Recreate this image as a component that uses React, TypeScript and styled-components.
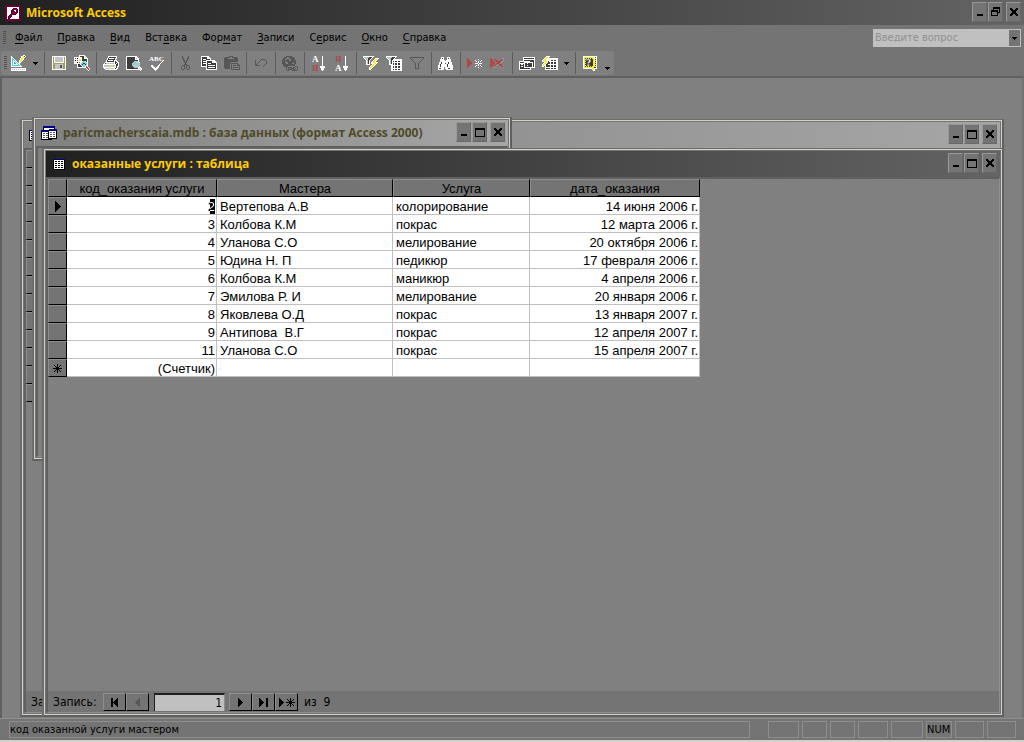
import React from "react";
import styled, { createGlobalStyle, css } from "styled-components";

const c = {
  chrome: "#747474",
  face: "#808080",
  light: "#8e8e8e",
  edge: "#d4d0c8",
  dark: "#606060",
  accent: "#ffcc00",
};

const uiFont = `"DejaVu Sans Condensed", "DejaVu Sans", sans-serif`;
const titleFont = `"Open Sans", "Noto Sans", sans-serif`;
const gridFont = `"Liberation Sans", Arial, sans-serif`;

const GlobalStyle = createGlobalStyle`
  * { box-sizing: border-box; }
  body { margin: 0; background: ${c.face}; }
  button, input { font: inherit; color: inherit; border-radius: 0; margin: 0; }
`;

/* ---------- pixel icons ---------- */

const palette: Record<string, string> = {
  W: "#ffffff",
  L: "#c4c4c4",
  D: "#3c3c3c",
  G: "#565656",
  M: "#a0a0a0",
  K: "#000000",
  Y: "#f4ec28",
  O: "#a0a058",
  C: "#38d8e8",
  T: "#a8d0d4",
  R: "#b04848",
  E: "#e03030",
  N: "#000080",
  P: "#800040",
  Q: "#500028",
};

const Svg = styled.svg`
  display: block;
  flex: none;
  overflow: visible;
`;

function Pixels({ rows, children }: { rows: string[]; children?: React.ReactNode }) {
  const width = Math.max(...rows.map((r) => r.length));
  const runs: React.ReactNode[] = [];
  rows.forEach((row, y) => {
    let x = 0;
    while (x < row.length) {
      let end = x + 1;
      while (end < row.length && row[end] === row[x]) end++;
      if (palette[row[x]]) {
        runs.push(<rect key={`${x}-${y}`} x={x} y={y} width={end - x} height={1} fill={palette[row[x]]} />);
      }
      x = end;
    }
  });
  return (
    <Svg width={width} height={rows.length} viewBox={`0 0 ${width} ${rows.length}`} shapeRendering="crispEdges" aria-hidden>
      {runs}
      {children}
    </Svg>
  );
}

const icons: Record<string, string[]> = {
  key: [
    "PQPQPQPQPQPQPQPQ",
    "QPQPQPQPQPQPQPQP",
    "PQWWWWWWWWWWWWPQ",
    "QPWWWWWWQQQQWWQP",
    "PQWWWWWQPPPPQWPQ",
    "QPWWWWQPPWWPQWQP",
    "PQWWWWQPPPWPQWPQ",
    "QPWWWWQPPPPPQWQP",
    "PQWWWWQPPPPQWWPQ",
    "QPWWWQPPQQQWWWQP",
    "PQWWQPQWWWWWWWPQ",
    "QPWQPPQWWWWWWWQP",
    "PQWQPQWWWWWWWWPQ",
    "QPWQQWWWWWWWWWQP",
    "PQPQPQPQPQPQPQPQ",
    "QPQPQPQPQPQPQPQP",
  ],
  design: [
    "............WW..",
    "W.........WWYRW.",
    "WW........WYYW..",
    "WCW......WYYW...",
    "WCCW.....WYYW...",
    "WCWCW...WYYW....",
    "WCWWCW..WYW.....",
    "WCW.WCW.WW......",
    "WCW..WCWW.......",
    "WCWWWWWCW.......",
    "WCCCCCCCCW......",
    "WWWWWWWWWWW.....",
    "................",
    "WWWWWWWWWWWWWWW.",
    "WLWLWLWLWLWLWLW.",
    "WWWWWWWWWWWWWWW.",
  ],
  save: [
    "WWWWWWWWWWWWWW",
    "WOWLLLLLLLLWOW",
    "WOWLLLLLLLLWOW",
    "WOWLLLLLLLLWOW",
    "WOWLLLLLLLLWOW",
    "WOWLLLLLLLLWOW",
    "WOWWWWWWWWWWOW",
    "WOOOOOOOOOOOOW",
    "WOOLLLLLLLLOOW",
    "WOOLLLLLGGLOOW",
    "WOOLLLLLGGLOOW",
    "WOOLLLLLGGLOOW",
    "WOOLLLLLLLLOOW",
    "WWWWWWWWWWWWWW",
  ],
  search: [
    ".....WWWWWW.....",
    ".....WDDDDWW....",
    "WWWWWWWWDDWLW...",
    "WEWNWWWWDDWWWW..",
    "WWWWWYYWDDDDDW..",
    "WNWEWYYWDDDDDW..",
    "WWWWWWWWWCCWDW..",
    "WYWNWEWWCTTCWW..",
    "WWWWWWWCTDDTCW..",
    "...WDDWCDTTDCW..",
    "...WDDDWCTTCWW..",
    "...WDDDDWCCWEW..",
    "...WWWWWWWWWEEW.",
    "............WEEW",
    ".............WEW",
    "..............W.",
  ],
  print: [
    ".....WWWWWWWWW..",
    ".....WDDDDDDDW..",
    "....WDWWWWWDWW..",
    "....WDDDDDDDW...",
    "...WDWWWWWDWWW..",
    "...WDDDDDDDWDWW.",
    "..WWWWWWWWWWDDWW",
    ".WDLLLLLLLLWDWDW",
    "WWWWWWWWWWWWWDDW",
    "WLLLLLLLLLLLWDDW",
    "WLLLLLLYYYLLWDWW",
    "WWWWWWWWWWWWWDW.",
    ".WLLLLLLLLLWDWW.",
    "..WWWWWWWWWWWW..",
  ],
  preview: [
    "WWWWWWWWWWW.....",
    "WDDDDDDDDWWW....",
    "WDDDDDDDDWLWW...",
    "WDDDDDDDDWWWW...",
    "WDDDDDDDDDDDW...",
    "WDDDDDDDLLLLW...",
    "WDDDDDDLTCTTLW..",
    "WDDDDDLTCTTTTL..",
    "WDDDDDLCTTTTTL..",
    "WDDDDDLTTTTTTL..",
    "WDDDDDDLTTTTLW..",
    "WDDDDDDDLLLLWWW.",
    "WDDDDDDDDDDDWLWW",
    "WWWWWWWWWWWWWWLW",
    "..............W.",
  ],
  spell: [
    "................",
    "................",
    "................",
    "................",
    "..............W.",
    ".............W..",
    "............W...",
    "...........W....",
    "..........W.....",
    "..WW.....WW.....",
    "..WWW...WW......",
    "...WWW.WWW......",
    "....WWWWW.......",
    ".....WWW........",
    "......W.........",
  ],
  cut: [
    "..G.....G..",
    "..G.....G..",
    "..GG...GG..",
    "...G...G...",
    "...GG.GG...",
    "....G.G....",
    "....GGG....",
    ".....G.....",
    "....GGG....",
    "..GGG.GGG..",
    ".G..G.G..G.",
    ".G..G.G..G.",
    ".G..G.G..G.",
    "..GG...GG..",
  ],
  copy: [
    "WWWWWWWW........",
    "WDDDDDWWW.......",
    "WDDDDDWWWW......",
    "WDWWWDDDDW......",
    "WDDDDWWWWWWWWW..",
    "WDWWWWDDDDDWWWW.",
    "WDDDDWDDDDDWWWWW",
    "WDWWWWDWWWDDDDDW",
    "WDDDDWDDDDDDDDDW",
    "WDDDDWDWWWWWWWDW",
    "WWWWWWDDDDDDDDDW",
    ".....WDWWWWWWWDW",
    ".....WDDDDDDDDDW",
    ".....WWWWWWWWWWW",
  ],
  paste: [
    ".....GGGG.......",
    ".GGGGG..GGGGG...",
    "GGGG......GGGG..",
    "GGGGGGGGGGGGGG..",
    "GGGGGGGGGGGGGG..",
    "GGGGGGGGGGGGGG..",
    "GGGGGGG.........",
    "GGGGGG.GGGGGGG..",
    "GGGGGG.G.....GG.",
    "GGGGGG.G.GGG.GGG",
    "GGGGGG.G.......G",
    "GGGGGG.G.GGGGG.G",
    ".GGGGG.G.......G",
    ".......GGGGGGGGG",
  ],
  undo: [
    "......GGGG..",
    "G....G....G.",
    "G...G......G",
    "G..G.......G",
    "G.G........G",
    "GG........G.",
    "GGGGG....G..",
    "........G...",
  ],
  link: [
    "....GGGGGG......",
    "..GGG..GGGGG....",
    ".GGG....GGGGG...",
    ".GG..GG..GGGG...",
    "GGGGGGG..GGGGG..",
    "GGG.GGGGGGGGGG..",
    "GGG...GGGGG.GG..",
    "GGGG..GGGG..GG..",
    ".GGGGGGGGGGGG...",
    ".GGGGGGGGGGGG...",
    "..GGGG.......GG.",
    "....G.GGGG.GG..G",
    "....G.G.GGGG.G.G",
    "....G.GGGG.GG..G",
    ".....GG...GGGGG.",
  ],
  arrow: [
    "................",
    "...........W....",
    "...........W....",
    "...........W....",
    "...........W....",
    "...........W....",
    "...........W....",
    "...........W....",
    "...........W....",
    "...........W....",
    "...........W....",
    ".........WWWWW..",
    ".........WWWWW..",
    "..........WWW...",
    "..........WWW...",
    "...........W....",
  ],
  filterSelection: [
    "WWWWWWWWWWW.....",
    "WTTTLLDDDW......",
    ".WTLLDDDW...WWWW",
    "..WTLDDW...WYYW.",
    "...WLDW...WYYW..",
    "...WLDW..WYYW...",
    "...WLDW.WYYYWWW.",
    "...WLDW.WWWYYW..",
    "...WWWW..WYYW...",
    "........WYYW....",
    ".......WYYW.....",
    "......WYYW......",
    "......WYW.......",
    "......WW........",
  ],
  filterForm: [
    "WWWWWWWWWWW.....",
    "WTTTLLDDDW......",
    ".WTLLDDDW.......",
    "..WTLDDWWWWWWWWW",
    "...WLDWWWWWWWWWW",
    "...WLDWDWDDWDDWW",
    "...WLDWWWWWWWWWW",
    "...WLDWDWDDWDDWW",
    "...WWWWDWDDWDDWW",
    ".....WWWWWWWWWWW",
    ".....WWDWDDWDDWW",
    ".....WWDWDDWDDWW",
    ".....WWWWWWWWWWW",
    ".....WWDWDDWDDWW",
    ".....WWWWWWWWWWW",
  ],
  filter: [
    "GGGGGGGGGGGGGG",
    "G............G",
    ".G..........G.",
    "..G........G..",
    "...G......G...",
    "....G....G....",
    ".....G..G.....",
    ".....G..G.....",
    ".....G..G.....",
    ".....G..G.....",
    ".....G..G.....",
    ".....GGGG.....",
  ],
  find: [
    "...WWW...WWW....",
    "...WDW...WDW....",
    "..WWWW...WWWW...",
    "..WWWWW.WWWWW...",
    "..WWWWWWWWWWW...",
    ".WWDWWWWWWDWWW..",
    ".WWDWWWDWWDWWW..",
    ".WDWWWWWWDWWWW..",
    "WWDWWWWWWDWWWWW.",
    "WWDWWWWWWDWWWWW.",
    "WWWWWW.WWWWWWWW.",
    "WDDWWW.WWWDDWWW.",
    "WWWWWW..WWWWWWW.",
  ],
  newRecord: [
    "R..............",
    "RR.........W...",
    "RRR.....W.....W",
    "RRRR.....W.W.W.",
    "RRRRR......W...",
    "RRRRR...WWW.WWW",
    "RRRR.......W...",
    "RRR......W.W.W.",
    "RR......W.....W",
    "R..........W...",
  ],
  deleteRecord: [
    "R...........MM.",
    "RR..RR.....RR..",
    "RRR..RRR..RR.M.",
    "RRRR..RRRRR.M..",
    "RRRRR..RRR.M...",
    "RRRRR.RRRRM....",
    "RRRR.RRM.RRR...",
    "RRR.RRM...RRRM.",
    "RR.RRM......RR.",
    "R..MM........M.",
  ],
  dbWindow: [
    "....WWWWWWWWWWWW",
    "....WDDDDDDDDDDW",
    "....WWWWWWWWWWWW",
    "....WDDDDDDDDDDW",
    "WWWWWWWWWWWDDDDW",
    "WDDDDWWWWWWWWWDW",
    "WWWWWWDDWDDDDWDW",
    "WDWWDWDDDDDDDWDW",
    "WDDDDWDDWDDDDWDW",
    "WDWWDWDDDDDDDWDW",
    "WDDDDWWWWWWWWWWW",
    "WDDDDDDDDDDW....",
    "WWWWWWWWWWWW....",
  ],
  newObject: [
    "....WWWW........",
    "...WYYW.........",
    "..WYYWWWWWWWWWWW",
    ".WYYWWWWWWWWWWWW",
    "WYYYWWWWWDDWDDWW",
    "WWWYYWDWWWWWWWWW",
    "..WYYWDDWDDWDDWW",
    ".WYYWDDDWDDWDDWW",
    "WYYWDDWWWWWWWWWW",
    "WYWWDDDDWDDWDDWW",
    "WW.WDDDDWDDWDDWW",
    "...WWWWWWWWWWWWW",
    "...WDDDDWDDWDDWW",
    "...WWWWWWWWWWWWW",
  ],
  help: [
    "WWWWWWWWWWWWWW",
    "WYYYYYYYYYYWDW",
    "WYDYDYDYDYYWWW",
    "WYYDDDDDDDYYDW",
    "WYDDDDDDDDYYYW",
    "WYYDDDDDDDYYDW",
    "WYDDDDDDDDYYYW",
    "WYYDDDDDDDYYDW",
    "WYDDDDDDDDYYYW",
    "WYYDDDDDDDYYDW",
    "WYDYDYDYDYYYYW",
    "WYYYYYYYYYYDDW",
    "WWWWWWWWWYYWWW",
    ".........WYW..",
    "..........WW..",
  ],
  database: [
    "..NNNNNNNNNNNN..",
    "..NNNNNNNNNNNN..",
    "..KWWWWWWWWWWK..",
    "..KWWWWWNNNNNNNN",
    "NNNNNNNNNNNNNNNN",
    "NNNNNNNKWWWWWWWK",
    "KWWWWWWKWGGWGGWK",
    "KWGGWGGKWWWWWWWK",
    "KWWWWWWKWGGWGGWK",
    "KWGGWGGKWWWWWWWK",
    "KWWWWWWKWGGWGGWK",
    "KWGGWGGKWWWWWWWK",
    "KWWWWWWKKKKKKKKK",
    "KKKKKKKKKKK.....",
  ],
  table: [
    "NNNNNNNNNNNN",
    "KWWWWWWWWWWK",
    "KWKKWKKWKKWK",
    "KWWWWWWWWWWK",
    "KWKKWKKWKKWK",
    "KWWWWWWWWWWK",
    "KWKKWKKWKKWK",
    "KWWWWWWWWWWK",
    "KWKKWKKWKKWK",
    "KWWWWWWWWWWK",
    "KKKKKKKKKKKK",
  ],
  caret: ["KKKKK", ".KKK.", "..K.."],
  minimize: ["........", "........", "........", "........", "........", "........", ".KKKKKK.", ".KKKKKK."],
  maximize: [
    "KKKKKKKKKK",
    "KKKKKKKKKK",
    "K........K",
    "K........K",
    "K........K",
    "K........K",
    "K........K",
    "K........K",
    "KKKKKKKKKK",
  ],
  restore: [
    "..KKKKKKK",
    "..KKKKKKK",
    "..K.....K",
    "KKKKKKK.K",
    "KKKKKKK.K",
    "K.....KKK",
    "K.....K..",
    "K.....K..",
    "KKKKKKK..",
  ],
  close: ["KK....KK", "KKK..KKK", ".KKKKKK.", "..KKKK..", "..KKKK..", ".KKKKKK.", "KKK..KKK", "KK....KK"],
  first: ["KK....K", "KK...KK", "KK..KKK", "KK.KKKK", "KKKKKKK", "KK.KKKK", "KK..KKK", "KK...KK", "KK....K"],
  previous: ["....G", "...GG", "..GGG", ".GGGG", "GGGGG", ".GGGG", "..GGG", "...GG", "....G"],
  next: ["K....", "KK...", "KKK..", "KKKK.", "KKKKK", "KKKK.", "KKK..", "KK...", "K...."],
  last: ["K......KK", "KK.....KK", "KKK....KK", "KKKK...KK", "KKKKK..KK", "KKKK...KK", "KKK....KK", "KK.....KK", "K......KK"],
  addNew: [
    "K..........K....",
    "KK......K..K..K.",
    "KKK......K.K.K..",
    "KKKK......KKK...",
    "KKKKK..KKKKKKKKK",
    "KKKK......KKK...",
    "KKK......K.K.K..",
    "KK......K..K..K.",
    "K..........K....",
  ],
  current: ["K.....", "KK....", "KKK...", "KKKK..", "KKKKK.", "KKKKKK", "KKKKK.", "KKKK..", "KKK...", "KK....", "K....."],
  star: [
    "....K....",
    ".K..K..K.",
    "..K.K.K..",
    "...KKK...",
    "KKKKKKKKK",
    "...KKK...",
    "..K.K.K..",
    ".K..K..K.",
    "....K....",
  ],
};

const IconText = styled.text<{ $size: number }>`
  font: bold ${(p) => p.$size}px "Liberation Serif", serif;
`;

/* ---------- application frame ---------- */

const Frame = styled.div`
  min-height: 100vh;
  display: flex;
  flex-direction: column;
  background: ${c.chrome};
  color: #000;
  font: 11px/14px ${uiFont};
  cursor: default;
`;

const barTitle = css`
  margin: 0;
  flex: 1;
  white-space: nowrap;
  overflow: hidden;
  font: bold 12px/16px ${titleFont};
`;

const AppTitleBar = styled.header`
  height: 25px;
  display: flex;
  align-items: center;
  gap: 5px;
  padding: 0 3px 0 5px;
  background: linear-gradient(90deg, #202020, #646464);
`;

const AppTitle = styled.h1`
  ${barTitle}
  color: ${c.accent};
`;

const ControlGroup = styled.div`
  display: flex;
  gap: 1px;
  padding-bottom: 2px;

  & > :last-child {
    margin-left: 2px;
  }
`;

const ControlButton = styled.button`
  width: 15px;
  height: 20px;
  display: grid;
  place-items: center;
  padding: 0;
  background: ${c.chrome};
  border: solid;
  border-width: 1px;
  border-color: #989898 #686868 #686868 #989898;
`;

const MenuRow = styled.div`
  height: 26px;
  display: flex;
  align-items: center;
  padding: 0 3px 0 3px;
`;

const Grip = styled.span`
  width: 3px;
  height: 14px;
  background: repeating-linear-gradient(#505050 0 1px, transparent 1px 2px);
`;

const MenuList = styled.nav`
  flex: 1;
  display: flex;
  gap: 1px;
  padding-left: 2px;
`;

const MenuButton = styled.button`
  border: 0;
  padding: 0 7px;
  background: none;

  u {
    text-underline-offset: 2px;
  }
`;

const AskBox = styled.div`
  width: 148px;
  height: 18px;
  display: flex;
  padding: 1px;
  background: #c0c0c0;
`;

const AskInput = styled.input`
  flex: 1;
  min-width: 0;
  border: 0;
  padding: 0 1px;
  background: none;

  &::placeholder {
    color: #909090;
    opacity: 1;
  }
`;

const AskArrow = styled.button`
  width: 11px;
  border: 0;
  padding: 0;
  display: grid;
  place-items: center;
  background: ${c.chrome};
`;

const ToolbarRow = styled.div`
  padding: 0 0 1px 1px;
`;

const Toolbar = styled.div`
  width: fit-content;
  height: 24px;
  display: flex;
  align-items: center;
  padding: 0 0 0 3px;
  border-radius: 2px;
  background: ${c.face};
`;

const ToolButton = styled.button<{ $narrow?: boolean }>`
  width: ${(p) => (p.$narrow ? 11 : 23)}px;
  height: 22px;
  display: grid;
  place-items: center;
  border: 0;
  padding: 0;
  background: none;
`;

const OptionsButton = styled(ToolButton)`
  align-self: end;
  width: 13px;
  height: 14px;
`;

const Separator = styled.span`
  width: 1px;
  height: 22px;
  margin: 0 2px 0 3px;
  background: #5c5c5c;
`;

const Workspace = styled.main`
  position: relative;
  flex: 1;
  min-height: 480px;
  background: ${c.face};
  border: solid;
  border-width: 2px 2px 0 2px;
  border-color: ${c.dark} #727272 ${c.face} ${c.dark};
`;

/* ---------- child windows ---------- */

const WindowBox = styled.section`
  position: absolute;
  display: flex;
  flex-direction: column;
  border: solid;
  border-width: 1px 2px 2px 2px;
  border-color: #6c6c6c ${c.dark} ${c.dark} #6c6c6c;
  background: ${c.chrome};
`;

const BackWindow = styled(WindowBox)`
  inset: 41px 18px 1px 18px;
`;

const DatabaseWindow = styled(WindowBox)`
  left: 30px;
  top: 39px;
  width: 480px;
  height: 344px;
`;

const FrontWindow = styled(WindowBox)`
  inset: 70px 18px 1px 40px;
`;

const WindowEdge = styled.div`
  flex: 1;
  min-height: 0;
  display: flex;
  flex-direction: column;
  border: 1px solid ${c.edge};
  padding: 1px;
`;

const WindowTitleBar = styled.header<{ $active?: boolean }>`
  height: 26px;
  flex: none;
  display: flex;
  align-items: center;
  gap: ${(p) => (p.$active ? 7 : 6)}px;
  padding: 0 3px 0 ${(p) => (p.$active ? 7 : 5)}px;
  color: ${(p) => (p.$active ? c.accent : "#504a28")};
  background: ${(p) => (p.$active ? "linear-gradient(90deg, #202020, #646464)" : "linear-gradient(90deg, #808080, #a6a6a6)")};
`;

const WindowTitle = styled.h2`
  ${barTitle}
`;

const WindowBody = styled.div`
  flex: 1;
  min-height: 0;
  display: flex;
  flex-direction: column;
  border: solid;
  border-width: 2px 1px 1px 2px;
  border-color: ${c.dark} ${c.light} ${c.light} ${c.dark};
  background: ${c.face};
`;

const SheetArea = styled.div`
  flex: 1;
  min-height: 0;
  overflow: hidden;
`;

const Sheet = styled.table`
  width: 652px;
  table-layout: fixed;
  border-collapse: separate;
  border-spacing: 0;
  font: 13px/15px ${gridFont};
`;

const raised = css`
  background: ${c.chrome};
  border: solid;
  border-width: 1px;
  border-color: ${c.light} #000 #000 ${c.light};
`;

const HeadCell = styled.th`
  ${raised}
  height: 18px;
  padding: 0;
  font-weight: normal;
  white-space: nowrap;
  overflow: hidden;
`;

const RowSelector = styled.td`
  ${raised}
  height: 18px;
  padding: 0;
  line-height: 0;

  svg {
    margin: 0 auto;
  }
`;

const Cell = styled.td<{ $end?: boolean }>`
  height: 18px;
  padding: 2px ${(p) => (p.$end ? 1 : 3)}px 0;
  text-align: ${(p) => (p.$end ? "right" : "left")};
  white-space: pre;
  overflow: hidden;
  background: #fff;
  border: solid #c0c0c0;
  border-width: 0 1px 1px 0;
`;

const CellCursor = styled.span`
  display: inline-block;
  vertical-align: top;
  background: linear-gradient(90deg, transparent calc(100% - 5px), #000 0);

  span {
    color: transparent;
    background: linear-gradient(90deg, #000 calc(100% - 5px), #fff 0);
    background-clip: text;
    -webkit-background-clip: text;
  }
`;

const Navigator = styled.footer`
  height: 21px;
  flex: none;
  display: flex;
  align-items: center;
  padding: 2px 5px 1px;
  background: ${c.chrome};
  font: 12px/16px ${uiFont};
`;

const NavLabel = styled.label`
  width: 50px;
`;

const NavButton = styled.button`
  ${raised}
  width: 23px;
  height: 18px;
  display: grid;
  place-items: center;
  padding: 0;
`;

const RecordInput = styled.input`
  width: 71px;
  height: 18px;
  margin: 0 4px 0 5px;
  padding: 0 2px;
  text-align: right;
  background: #c0c0c0;
  border: solid;
  border-width: 2px 1px 0 1px;
  border-color: #202020 ${c.light} ${c.light} #202020;
`;

const NavCount = styled.span`
  margin-left: 6px;
  white-space: pre;
`;

/* ---------- status bar ---------- */

const StatusBar = styled.footer`
  height: 24px;
  display: flex;
  gap: 3px;
  padding: 2px 8px 2px 9px;
  border-top: 1px solid ${c.light};
  border-bottom: 2px solid ${c.edge};
`;

const StatusField = styled.div<{ $width?: number }>`
  ${(p) => (p.$width ? `width: ${p.$width}px;` : "flex: 1; margin-right: 15px;")}
  height: 17px;
  line-height: 15px;
  white-space: nowrap;
  overflow: hidden;
  border: 1px solid ${c.light};
`;

/* ---------- data ---------- */

const menus: [string, string, string][] = [
  ["", "Ф", "айл"],
  ["", "П", "равка"],
  ["", "В", "ид"],
  ["Вст", "а", "вка"],
  ["Фор", "м", "ат"],
  ["", "З", "аписи"],
  ["С", "е", "рвис"],
  ["", "О", "кно"],
  ["", "С", "правка"],
];

const columns = ["код_оказания услуги", "Мастера", "Услуга", "дата_оказания"];
const columnWidths = [19, 150, 176, 137, 170];

const records = [
  ["2", "Вертепова А.В", "колорирование", "14 июня 2006 г."],
  ["3", "Колбова К.М", "покрас", "12 марта 2006 г."],
  ["4", "Уланова С.О", "мелирование", "20 октября 2006 г."],
  ["5", "Юдина Н. П", "педикюр", "17 февраля 2006 г."],
  ["6", "Колбова К.М", "маникюр", "4 апреля 2006 г."],
  ["7", "Эмилова Р. И", "мелирование", "20 января 2006 г."],
  ["8", "Яковлева О.Д", "покрас", "13 января 2007 г."],
  ["9", "Антипова  В.Г", "покрас", "12 апреля 2007 г."],
  ["11", "Уланова С.О", "покрас", "15 апреля 2007 г."],
];

const tools: string[][] = [
  ["design", "caret"],
  ["save", "search"],
  ["print", "preview", "spell"],
  ["cut", "copy", "paste"],
  ["undo"],
  ["link"],
  ["sortAsc", "sortDesc"],
  ["filterSelection", "filterForm", "filter"],
  ["find"],
  ["newRecord", "deleteRecord"],
  ["dbWindow", "newObject", "caret"],
  ["help"],
];

const statusWidths = [31, 25, 25, 30, 32, 26, 29, 29];

/* ---------- parts ---------- */

function ToolIcon({ name }: { name: string }) {
  if (name === "sortAsc" || name === "sortDesc") {
    const asc = name === "sortAsc";
    return (
      <Pixels rows={icons.arrow}>
        <IconText $size={9} x={1} y={7} fill={asc ? "#fff" : "#b04848"}>{asc ? "А" : "Я"}</IconText>
        <IconText $size={9} x={1} y={16} fill={asc ? "#b04848" : "#fff"}>{asc ? "Я" : "А"}</IconText>
      </Pixels>
    );
  }
  if (name === "spell") {
    return (
      <Pixels rows={icons.spell}>
        <IconText $size={7} x={0} y={5} fill="#fff">ABC</IconText>
      </Pixels>
    );
  }
  if (name === "help") {
    return (
      <Pixels rows={icons.help}>
        <IconText $size={10} x={3} y={10} fill="#fff">?</IconText>
      </Pixels>
    );
  }
  return <Pixels rows={icons[name]} />;
}

function Controls({ restore }: { restore?: boolean }) {
  return (
    <ControlGroup>
      <ControlButton aria-label="Свернуть"><Pixels rows={icons.minimize} /></ControlButton>
      <ControlButton aria-label="Развернуть"><Pixels rows={restore ? icons.restore : icons.maximize} /></ControlButton>
      <ControlButton aria-label="Закрыть"><Pixels rows={icons.close} /></ControlButton>
    </ControlGroup>
  );
}

function SheetColumns() {
  return (
    <colgroup>
      {columnWidths.map((w, i) => <col key={i} width={w} />)}
    </colgroup>
  );
}

function ServicesSheet() {
  return (
    <Sheet>
      <SheetColumns />
      <thead>
        <tr>
          <HeadCell aria-label="Выбор записи" />
          {columns.map((name) => <HeadCell key={name} scope="col">{name}</HeadCell>)}
        </tr>
      </thead>
      <tbody>
        {records.map(([id, master, service, date], i) => (
          <tr key={id}>
            <RowSelector>{i === 0 && <Pixels rows={icons.current} />}</RowSelector>
            <Cell $end>{i === 0 ? <CellCursor><span>{id}</span></CellCursor> : id}</Cell>
            <Cell>{master}</Cell>
            <Cell>{service}</Cell>
            <Cell $end>{date}</Cell>
          </tr>
        ))}
        <tr>
          <RowSelector><Pixels rows={icons.star} /></RowSelector>
          <Cell $end>(Счетчик)</Cell>
          <Cell />
          <Cell />
          <Cell />
        </tr>
      </tbody>
    </Sheet>
  );
}

function BackSheet() {
  return (
    <Sheet>
      <SheetColumns />
      <tbody>
        {Array.from({ length: 14 }, (_, i) => (
          <tr key={i}><RowSelector /></tr>
        ))}
      </tbody>
    </Sheet>
  );
}

export default function App() {
  return (
    <Frame>
      <GlobalStyle />
      <AppTitleBar>
        <Pixels rows={icons.key} />
        <AppTitle>Microsoft Access</AppTitle>
        <Controls restore />
      </AppTitleBar>

      <MenuRow>
        <Grip />
        <MenuList>
          {menus.map(([before, key, after]) => (
            <MenuButton key={before + key + after}>{before}<u>{key}</u>{after}</MenuButton>
          ))}
        </MenuList>
        <AskBox>
          <AskInput aria-label="Введите вопрос" placeholder="Введите вопрос" />
          <AskArrow aria-label="Список вопросов"><Pixels rows={icons.caret} /></AskArrow>
        </AskBox>
      </MenuRow>

      <ToolbarRow>
        <Toolbar role="toolbar">
          <Grip />
          {tools.map((group, g) => (
            <React.Fragment key={g}>
              {g > 0 && <Separator />}
              {group.map((name) => (
                <ToolButton key={name} $narrow={name === "caret"} aria-label={name}>
                  <ToolIcon name={name} />
                </ToolButton>
              ))}
            </React.Fragment>
          ))}
          <OptionsButton aria-label="Параметры панели"><Pixels rows={icons.caret} /></OptionsButton>
        </Toolbar>
      </ToolbarRow>

      <Workspace>
        <BackWindow>
          <WindowEdge>
            <WindowTitleBar>
              <Pixels rows={icons.table} />
              <WindowTitle />
              <Controls />
            </WindowTitleBar>
            <WindowBody>
              <SheetArea><BackSheet /></SheetArea>
              <Navigator>За</Navigator>
            </WindowBody>
          </WindowEdge>
        </BackWindow>

        <DatabaseWindow>
          <WindowEdge>
            <WindowTitleBar>
              <Pixels rows={icons.database} />
              <WindowTitle>paricmacherscaia.mdb : база данных (формат Access 2000)</WindowTitle>
              <Controls />
            </WindowTitleBar>
            <WindowBody />
          </WindowEdge>
        </DatabaseWindow>

        <FrontWindow>
          <WindowEdge>
            <WindowTitleBar $active>
              <Pixels rows={icons.table} />
              <WindowTitle>оказанные услуги : таблица</WindowTitle>
              <Controls />
            </WindowTitleBar>
            <WindowBody>
              <SheetArea><ServicesSheet /></SheetArea>
              <Navigator>
                <NavLabel htmlFor="record">Запись:</NavLabel>
                <NavButton aria-label="Первая запись"><Pixels rows={icons.first} /></NavButton>
                <NavButton aria-label="Предыдущая запись"><Pixels rows={icons.previous} /></NavButton>
                <RecordInput id="record" defaultValue="1" />
                <NavButton aria-label="Следующая запись"><Pixels rows={icons.next} /></NavButton>
                <NavButton aria-label="Последняя запись"><Pixels rows={icons.last} /></NavButton>
                <NavButton aria-label="Новая запись"><Pixels rows={icons.addNew} /></NavButton>
                <NavCount>из  9</NavCount>
              </Navigator>
            </WindowBody>
          </WindowEdge>
        </FrontWindow>
      </Workspace>

      <StatusBar>
        <StatusField>код оказанной услуги мастером</StatusField>
        {statusWidths.map((w, i) => (
          <StatusField key={i} $width={w}>{i === 5 ? "NUM" : ""}</StatusField>
        ))}
      </StatusBar>
    </Frame>
  );
}
